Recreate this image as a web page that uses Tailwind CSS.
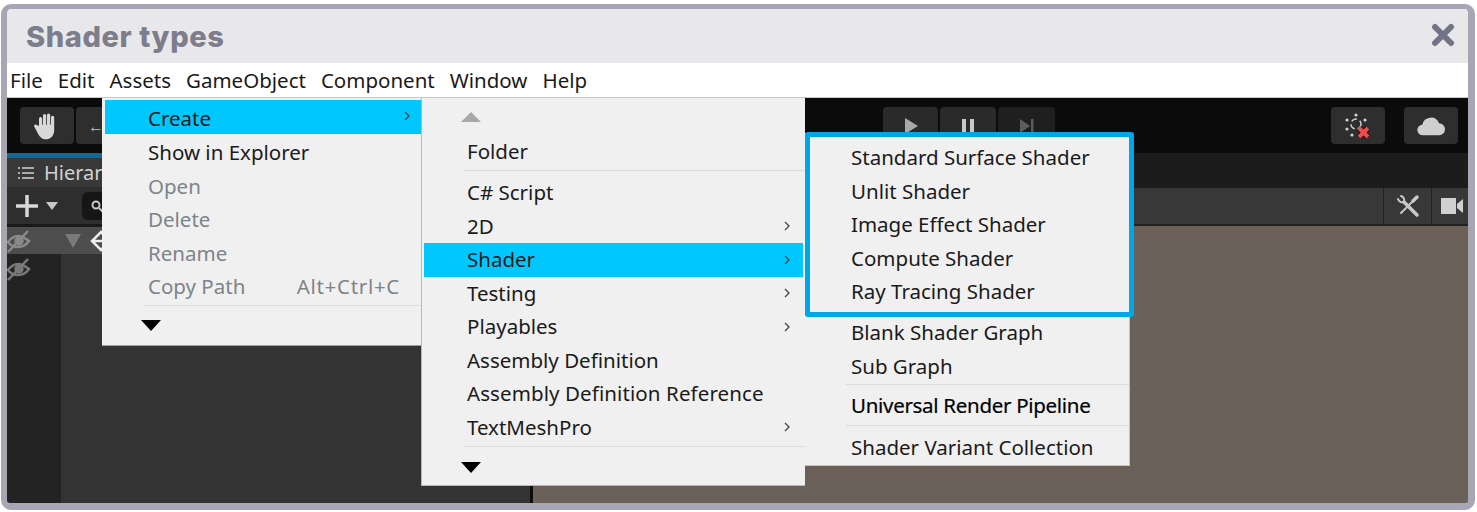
<!DOCTYPE html>
<html lang="en">
<head>
<meta charset="UTF-8" />
<title>Shader types</title>
<script src="https://cdn.jsdelivr.net/npm/@tailwindcss/browser@4"></script>
</head>
<body class="bg-white">
<div class="w-[1477px] h-[512px] pt-[4px] pl-px overflow-hidden font-['Noto_Sans',sans-serif]">
  <div class="w-[1474px] h-[506px] border-t-[5px] border-l-[6px] border-r-[7px] border-b-[7px] border-[#a6a6b4] rounded-[10px] flex flex-col overflow-hidden">
    <!-- title bar -->
    <div class="h-[54px] shrink-0 bg-[#e8e8ea] flex items-center justify-between pl-[19px] pr-[13px]">
      <h1 class="font-['Inter',sans-serif] font-extrabold text-[29px] tracking-[0.6px] pt-[2px] text-[#7d7d8b]">Shader types</h1>
      <svg class="w-6 h-6 -mt-[3px] text-[#737386]" viewBox="0 0 24 24" fill="none" stroke="currentColor" stroke-width="6" stroke-linecap="round"><path d="M4 4l16 16M20 4L4 20"/></svg>
    </div>
    <!-- menu bar -->
    <div class="h-[35px] shrink-0 bg-white flex items-center gap-[15px] pl-[3px] text-[20.500px] text-[#1a1a1a] border-b border-[#c9c9c9]">
      <span>File</span><span>Edit</span><span>Assets</span><span>GameObject</span><span>Component</span><span>Window</span><span>Help</span>
    </div>
    <!-- unity editor -->
    <div class="relative flex-1 flex flex-col bg-[#333333]">
      <div class="h-[55px] shrink-0 bg-[#0b0b0b] flex items-start pt-[9px] pl-[13px]">
        <div class="w-[54px] h-[37px] rounded-sm bg-[#2e2e2e] flex items-center justify-center">
          <svg class="w-8 h-8 text-[#d8d8d8]" viewBox="0 0 24 24" fill="currentColor"><path d="M6 12V6.500a1.200 1.200 0 0 1 2.400 0V11h.6V4.200a1.200 1.200 0 0 1 2.400 0V11h.6V3.800a1.200 1.200 0 0 1 2.400 0V11h.6V5.500a1.200 1.200 0 0 1 2.400 0V15c0 4-2.500 7-6 7s-5-2-6.500-5L2.500 12.500c-.8-1.200.9-2.300 1.900-1.200z"/></svg>
        </div>
        <div class="ml-[2px] w-[40px] h-[37px] rounded-sm bg-[#2e2e2e] flex items-center pl-3 text-[#bdbdbd]">←</div>
        <div class="ml-[767px] flex gap-[2px]">
          <div class="w-[55px] h-[37px] rounded-sm bg-[#2a2a2a] flex items-center justify-center">
            <svg class="w-4 h-4 text-[#a8a8a8]" viewBox="0 0 16 16" fill="currentColor"><path d="M2 0l13 8-13 8z"/></svg>
          </div>
          <div class="w-[56px] h-[37px] rounded-sm bg-[#2a2a2a] flex items-center justify-center">
            <svg class="w-4 h-4 text-[#c8c8c8]" viewBox="0 0 16 16" fill="currentColor"><path d="M2 1h4v14H2zM10 1h4v14h-4z"/></svg>
          </div>
          <div class="w-[57px] h-[37px] rounded-sm bg-[#1f1f1f] flex items-center justify-center">
            <svg class="w-4 h-4 text-[#5c5c5c]" viewBox="0 0 16 16" fill="currentColor"><path d="M1 1l10 7-10 7zM12 1h2.500v14H12z"/></svg>
          </div>
        </div>
        <div class="ml-[276px] w-[54px] h-[37px] rounded-sm bg-[#2e2e2e] flex items-center justify-center">
          <svg class="w-7 h-7" viewBox="0 0 28 28"><circle cx="12" cy="12" r="5" fill="none" stroke="#cfcfcf" stroke-width="1.500" stroke-dasharray="6 3"/><circle cx="12" cy="3" r="1.600" fill="#cfcfcf"/><circle cx="3" cy="8" r="1.600" fill="#cfcfcf"/><circle cx="21" cy="8" r="1.600" fill="#cfcfcf"/><circle cx="3" cy="17" r="1.600" fill="#cfcfcf"/><circle cx="8" cy="23" r="1.600" fill="#cfcfcf"/><path d="M15 16l9 9M24 16l-9 9" stroke="#111111" stroke-width="6"/><path d="M15 16l9 9M24 16l-9 9" stroke="#f04a4a" stroke-width="4"/></svg>
        </div>
        <div class="ml-[19px] w-[54px] h-[37px] rounded-sm bg-[#2e2e2e] flex items-center justify-center">
          <svg class="w-8 h-8 text-[#cfcfcf]" viewBox="0 0 24 24" fill="currentColor"><path d="M6 19a4 4 0 0 1-.5-8 6.500 6.500 0 0 1 12.500-1 4.500 4.500 0 0 1 0 9z"/></svg>
        </div>
      </div>
      <div class="flex-1 flex min-h-0">
        <!-- hierarchy -->
        <div class="w-[523px] shrink-0 flex flex-col border-t-[5px] border-[#0f6a9c]">
          <div class="h-[29px] shrink-0 bg-[#383838] flex items-center pl-[9px] gap-2 text-[#d2d2d2] text-[20px]">
            <svg class="w-5 h-5" viewBox="0 0 20 20" stroke="currentColor" stroke-width="1.500"><path d="M6 5h12M6 10h12M6 15h12M2 5h2M2 10h2M2 15h2"/></svg>
            <span>Hierarchy</span>
          </div>
          <div class="h-[40px] shrink-0 bg-[#2e2e2e] border-b-[3px] border-[#191919] flex items-center pl-2">
            <svg class="w-6 h-6 text-[#d8d8d8]" viewBox="0 0 24 24" stroke="currentColor" stroke-width="3.500"><path d="M12 1v22M1 12h22"/></svg>
            <div class="ml-[7px] w-0 h-0 border-x-[6px] border-x-transparent border-t-[8px] border-t-[#c8c8c8]"></div>
            <div class="ml-[24px] w-[60px] h-[28px] rounded-md bg-[#161616] flex items-center pl-2">
              <svg class="w-3.5 h-3.5 text-[#c8c8c8]" viewBox="0 0 14 14" fill="none" stroke="currentColor" stroke-width="2"><circle cx="6" cy="6" r="3.500"/><path d="M9 9l4 4"/></svg>
            </div>
          </div>
          <div class="h-[27px] shrink-0 bg-[#4d4d4d] flex items-center">
            <svg class="w-6 h-6 text-[#8a8a8a]" viewBox="0 0 24 24" fill="none" stroke="currentColor" stroke-width="2.500"><path d="M1 13c3-4 6-6 10-6s7 2 11 5c-3 4-7 6-11 6S4 17 1 13z"/><circle cx="12" cy="12" r="3.500" fill="currentColor"/><path d="M1 23L21 2"/></svg>
            <div class="ml-[34px] w-0 h-0 border-x-[8px] border-x-transparent border-t-[14px] border-t-[#7a7a7a]"></div>
            <svg class="ml-[8px] w-6 h-6 text-[#ececec]" viewBox="0 0 24 24" fill="none" stroke="currentColor" stroke-width="2.500"><path d="M12 3l9 9-9 9-9-9zM3 12h18"/></svg>
          </div>
          <div class="flex-1 flex min-h-0">
            <div class="w-[54px] bg-[#232323] pt-[3px]">
              <svg class="w-6 h-6 text-[#7a7a7a]" viewBox="0 0 24 24" fill="none" stroke="currentColor" stroke-width="2.500"><path d="M1 13c3-4 6-6 10-6s7 2 11 5c-3 4-7 6-11 6S4 17 1 13z"/><circle cx="12" cy="12" r="3.500" fill="currentColor"/><path d="M1 23L21 2"/></svg>
            </div>
            <div class="flex-1 bg-[#333333]"></div>
          </div>
        </div>
        <div class="w-[3px] shrink-0 bg-[#0d0d0d]"></div>
        <!-- scene -->
        <div class="flex-1 flex flex-col">
          <div class="h-[35px] shrink-0 bg-[#1c1c1c]"></div>
          <div class="h-[38px] shrink-0 bg-[#383838] border-b-2 border-[#222222] flex items-center justify-end">
            <div class="w-[48px] h-full border-l border-[#222222] flex items-center justify-center">
              <svg class="w-6 h-6 text-[#c8c8c8]" viewBox="0 0 24 24" fill="none" stroke="currentColor" stroke-linecap="round"><path d="M5 19L17 7" stroke-width="2"/><path d="M17 7l4-4" stroke-width="3.500"/><path d="M8 8l13 13" stroke-width="3.500"/><path d="M2 5a4.500 4.500 0 0 0 6 3M5 2a4.500 4.500 0 0 1 3 6" stroke-width="2"/></svg>
            </div>
            <div class="w-[37px] h-full border-l border-[#222222] flex items-center pl-[9px]">
              <svg class="w-[22px] h-4 text-[#d0d0d0]" viewBox="0 0 22 16" fill="currentColor"><path d="M0 0h15v16H0zM16 6l6-5v14l-6-5z"/></svg>
            </div>
          </div>
          <div class="flex-1 bg-[#6c6158]"></div>
        </div>
      </div>

      <!-- Assets menu -->
      <div class="absolute left-[95px] top-0 w-[319px] h-[248px] bg-[#f0f0f0] border-b border-[#a0a0a0] text-[20.500px] pt-[2px]">
        <div class="h-[34px] ml-[3px] bg-[#00c8ff] flex items-center justify-between pl-[43px] pr-2 pt-[3px] text-[#1a1a1a]"><span>Create</span><svg class="w-3 h-3 -mt-[6px] text-[#444444]" viewBox="0 0 12 12" fill="none" stroke="currentColor" stroke-width="1.300"><path d="M4 2l4 4-4 4"/></svg></div>
        <div class="h-[33.500px] flex items-center pl-[46px] pt-[4px] text-[#1a1a1a]">Show in Explorer</div>
        <div class="h-[33.500px] flex items-center pl-[46px] pt-[4px] text-[#7d8489]">Open</div>
        <div class="h-[33.500px] flex items-center pl-[46px] pt-[4px] text-[#7d8489]">Delete</div>
        <div class="h-[33.500px] flex items-center pl-[46px] pt-[4px] text-[#7d8489]">Rename</div>
        <div class="h-[33.500px] flex items-center justify-between pl-[46px] pr-[21px] pt-[4px] text-[#7d8489]"><span>Copy Path</span><span class="tracking-[0.7px]">Alt+Ctrl+C</span></div>
        <div class="ml-[42px] mt-[3px] border-t border-[#dcdcdc] pt-[14px]">
          <div class="-ml-[3px] w-0 h-0 border-x-[10px] border-x-transparent border-t-[11px] border-t-black"></div>
        </div>
      </div>

      <!-- Create menu -->
      <div class="absolute left-[414px] top-0 w-[384px] h-[388px] bg-[#f0f0f0] border-l border-b border-[#b8b8b8] text-[20.500px] text-[#1a1a1a]">
        <div class="h-[38px] pt-[14px] pl-[39px]"><div class="w-0 h-0 border-x-[10px] border-x-transparent border-b-[10px] border-b-[#a8a8a8]"></div></div>
        <div class="h-[35px] ml-[42px] pl-[3px] pb-[3px] flex items-center border-b border-[#dcdcdc]">Folder</div>
        <div class="h-[5px]"></div>
        <div class="h-[33.500px] flex items-center pl-[45px]">C# Script</div>
        <div class="h-[33.500px] flex items-center justify-between pl-[45px] pr-3"><span>2D</span><svg class="w-3 h-3 text-[#444444]" viewBox="0 0 12 12" fill="none" stroke="currentColor" stroke-width="1.300"><path d="M4 2l4 4-4 4"/></svg></div>
        <div class="h-[33.500px] mx-[2px] flex items-center justify-between pl-[43px] pr-[10px] bg-[#00c8ff]"><span>Shader</span><svg class="w-3 h-3 text-[#444444]" viewBox="0 0 12 12" fill="none" stroke="currentColor" stroke-width="1.300"><path d="M4 2l4 4-4 4"/></svg></div>
        <div class="h-[33.500px] flex items-center justify-between pl-[45px] pr-3"><span>Testing</span><svg class="w-3 h-3 text-[#444444]" viewBox="0 0 12 12" fill="none" stroke="currentColor" stroke-width="1.300"><path d="M4 2l4 4-4 4"/></svg></div>
        <div class="h-[33.500px] flex items-center justify-between pl-[45px] pr-3"><span>Playables</span><svg class="w-3 h-3 text-[#444444]" viewBox="0 0 12 12" fill="none" stroke="currentColor" stroke-width="1.300"><path d="M4 2l4 4-4 4"/></svg></div>
        <div class="h-[33.500px] flex items-center pl-[45px]">Assembly Definition</div>
        <div class="h-[33.500px] flex items-center pl-[45px] tracking-[0.1px]">Assembly Definition Reference</div>
        <div class="h-[33.500px] flex items-center justify-between pl-[45px] pr-3"><span>TextMeshPro</span><svg class="w-3 h-3 text-[#444444]" viewBox="0 0 12 12" fill="none" stroke="currentColor" stroke-width="1.300"><path d="M4 2l4 4-4 4"/></svg></div>
        <div class="ml-[42px] mt-[2px] border-t border-[#dcdcdc] pt-[15px]">
          <div class="-ml-[3px] w-0 h-0 border-x-[10px] border-x-transparent border-t-[11px] border-t-black"></div>
        </div>
      </div>

      <!-- Shader menu -->
      <div class="absolute left-[798px] top-[35px] w-[325px] h-[333px] bg-[#f0f0f0] border-b border-r border-[#c4c4c4] text-[20.500px] text-[#1a1a1a] pl-[46px]">
        <div class="h-[183px] flex flex-col pt-[8px]">
          <div class="h-[33.500px] flex items-center">Standard Surface Shader</div>
          <div class="h-[33.500px] flex items-center">Unlit Shader</div>
          <div class="h-[33.500px] flex items-center">Image Effect Shader</div>
          <div class="h-[33.500px] flex items-center">Compute Shader</div>
          <div class="h-[33.500px] flex items-center">Ray Tracing Shader</div>
        </div>
        <div class="h-[33.500px] flex items-center">Blank Shader Graph</div>
        <div class="h-[34.500px] flex items-center">Sub Graph</div>
        <div class="h-[42px] flex items-center text-black tracking-[-0.3px] [-webkit-text-stroke:0.2px_black] border-y border-[#dcdcdc] -ml-[5px] pl-[5px]">Universal Render Pipeline</div>
        <div class="h-[40px] flex items-center pt-[2px]">Shader Variant Collection</div>
      </div>
      <div class="absolute left-[798px] top-[34px] w-[329px] h-[185px] border-[5px] border-[#00a6e6] rounded-[3px]"></div>
    </div>
  </div>
</div>
</body>
</html>
